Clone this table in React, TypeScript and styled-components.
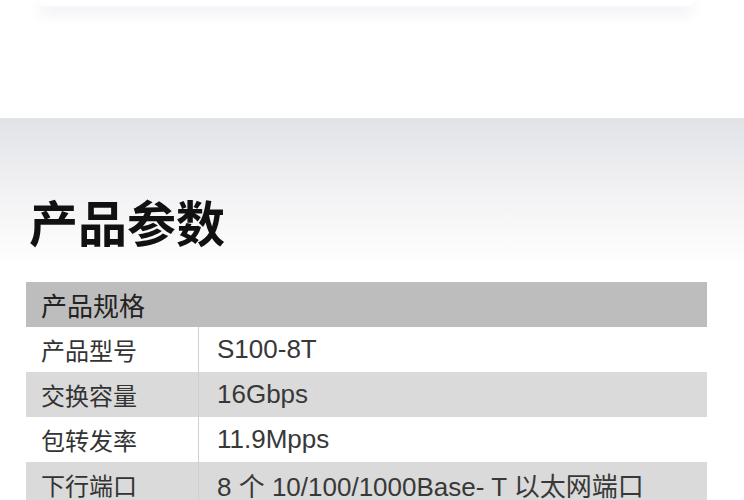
import React from "react";
import styled, { createGlobalStyle } from "styled-components";

const GlobalStyle = createGlobalStyle`
  body {
    margin: 0;
    background: #fff;
    font-family: "Liberation Sans", "Noto Sans CJK SC", sans-serif;
  }
`;

const Page = styled.div`
  width: 744px;
  height: 500px;
  overflow: hidden;
  background: #fff;
`;

const TopArea = styled.div`
  height: 118px;
  padding-left: 40px;
`;

const Card = styled.div`
  width: 652px;
  height: 6px;
  background: #fff;
  border-radius: 0 0 4px 4px;
  box-shadow: 0 6px 14px rgba(190, 196, 214, 0.45);
`;

const Section = styled.section`
  padding: 76px 0 0 26px;
  background: linear-gradient(180deg, #e2e3e7 0px, #f3f3f5 80px, #ffffff 150px);
  height: 382px;
  box-sizing: border-box;
`;

const Title = styled.h2`
  margin: 0 0 34px 3px;
  font-family: "Noto Sans CJK SC", sans-serif;
  font-size: 49px;
  font-weight: 700;
  line-height: 54px;
  color: #111;
`;

const Table = styled.div`
  width: 681px;
`;

const HeadRow = styled.div`
  height: 45px;
  display: flex;
  align-items: center;
  padding-left: 15px;
  background: #bdbdbd;
  font-family: "Noto Sans CJK SC", sans-serif;
  font-size: 26px;
  color: #222;
`;

const Row = styled.div<{ $shaded: boolean }>`
  display: grid;
  grid-template-columns: 173px 1fr;
  height: 45px;
  background: ${(p) => (p.$shaded ? "#dadada" : "#fff")};
  color: #333;
`;

const Label = styled.div`
  display: flex;
  align-items: center;
  padding-left: 15px;
  border-right: 1px solid #d0d0d0;
  font-family: "Noto Sans CJK SC", sans-serif;
  font-size: 24px;
`;

const Value = styled.div`
  display: flex;
  align-items: center;
  padding-left: 18px;
  font-family: "Liberation Sans", "Noto Sans CJK SC", sans-serif;
  font-size: 26px;
  color: #383838;
`;

const specs = [
  { label: "产品型号", value: "S100-8T" },
  { label: "交换容量", value: "16Gbps" },
  { label: "包转发率", value: "11.9Mpps" },
  { label: "下行端口", value: "8 个 10/100/1000Base- T 以太网端口" },
];

const App = (): React.ReactElement => {
  return (
    <Page>
      <GlobalStyle />
      <TopArea>
        <Card />
      </TopArea>
      <Section>
        <Title>产品参数</Title>
        <Table>
          <HeadRow>产品规格</HeadRow>
          {specs.map((s, i) => (
            <Row key={s.label} $shaded={i % 2 === 1}>
              <Label>{s.label}</Label>
              <Value>{s.value}</Value>
            </Row>
          ))}
        </Table>
      </Section>
    </Page>
  );
};

export default App;
